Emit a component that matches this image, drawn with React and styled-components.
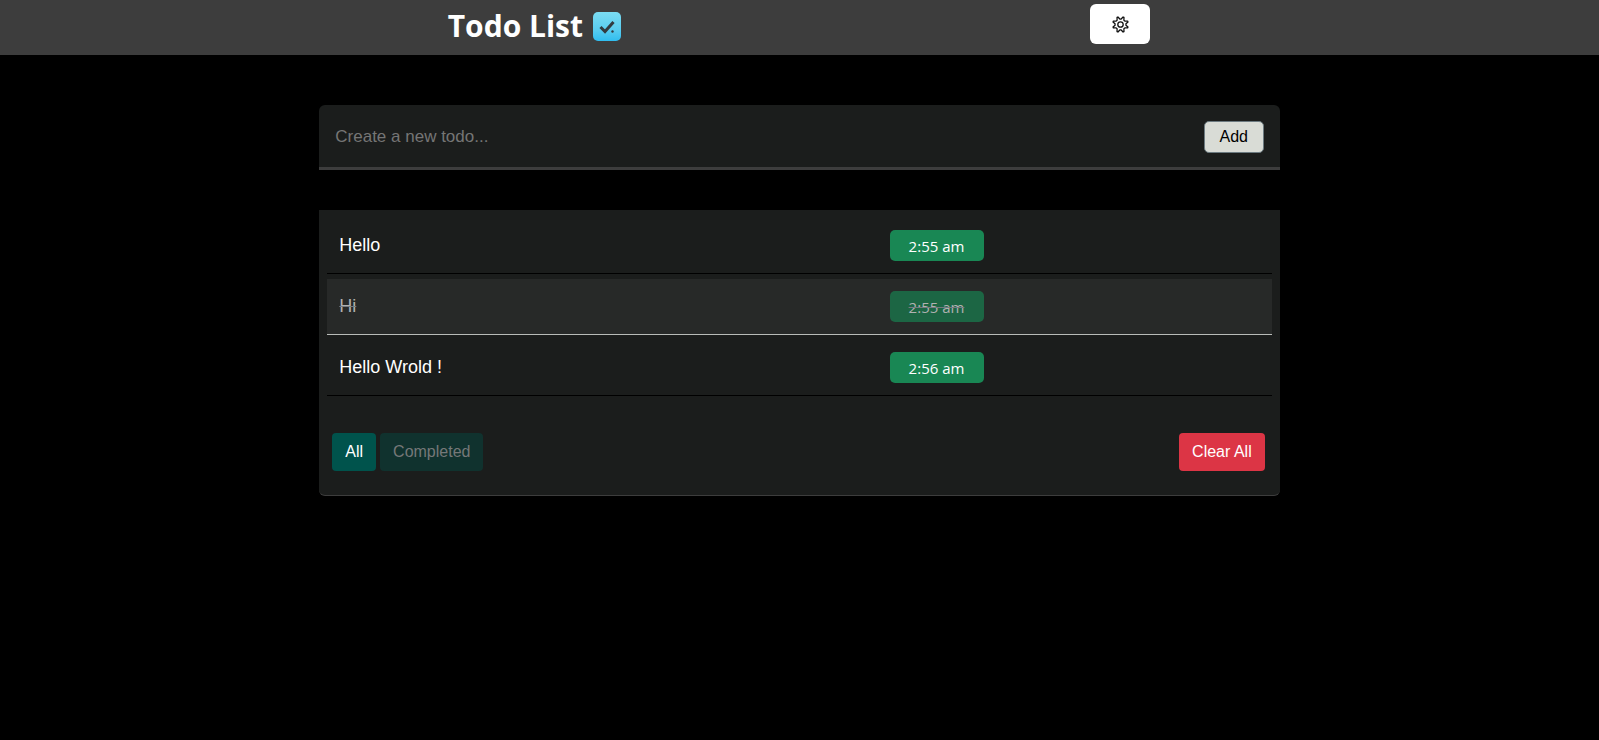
import React, { useState } from "react";
import styled, { createGlobalStyle } from "styled-components";

const GlobalStyle = createGlobalStyle`
  * { box-sizing: border-box; }
  body {
    margin: 0;
    background: #000;
    color: #fff;
    font-family: "Liberation Sans", Arial, sans-serif;
    font-size: 16px;
  }
`;

const Header = styled.header`
  display: flex;
  justify-content: space-between;
  align-items: flex-start;
  height: 55px;
  padding: 4px calc(28% + 1px) 0 28%;
  background: #3d3d3d;
`;

const Title = styled.h1`
  display: flex;
  align-items: center;
  gap: 10px;
  margin: 0;
  font: 700 30px/44px "Open Sans", "Noto Sans", sans-serif;
  white-space: nowrap;
`;

const Button = styled.button`
  border: 0;
  border-radius: 4px;
  padding: 0 13px;
  height: 38px;
  font: inherit;
  color: #fff;
  cursor: pointer;
`;

const SettingsButton = styled(Button)`
  display: grid;
  place-items: center;
  width: 60px;
  height: 40px;
  border-radius: 6px;
  background: #fff;
  color: #111;
`;

const Main = styled.main`
  display: flex;
  flex-direction: column;
  gap: 40px;
  width: calc(60% + 1px);
  margin: 50px auto 0;
`;

const TodoForm = styled.form`
  display: flex;
  align-items: center;
  height: 65px;
  padding: 2px 16px 0;
  background: #1b1d1c;
  border-bottom: 3px solid #3d3d3d;
  border-radius: 6px 6px 0 0;
`;

const TodoInput = styled.input`
  flex: 1;
  min-width: 0;
  padding: 0;
  border: 0;
  outline: 0;
  background: transparent;
  color: #fff;
  font: 17px/24px "Liberation Sans", Arial, sans-serif;
  &::placeholder { color: #757575; opacity: 1; }
`;

const AddButton = styled(Button)`
  width: 60px;
  height: 32px;
  border: 1px solid #6c7a80;
  border-radius: 5px;
  background: #d9dcd6;
  color: #000;
`;

const Panel = styled.section`
  padding: 8px 8px 24px;
  background: #1b1d1c;
  border-bottom: 1px solid #3d3d3d;
  border-radius: 0 0 6px 6px;
`;

const TodoItems = styled.ul`
  display: flex;
  flex-direction: column;
  gap: 5px;
  margin: 0;
  padding: 0;
  list-style: none;
`;

const TodoItem = styled.li`
  display: grid;
  grid-template-columns: 55fr 37fr;
  align-items: start;
  padding: 12px;
  border-bottom: 1px solid ${(p) => (p.$done ? "#b9bcb9" : "#000")};
  background: ${(p) => (p.$done ? "#272928" : "transparent")};
  color: ${(p) => (p.$done ? "#b0b1b1" : "#fff")};
  text-decoration: ${(p) => (p.$done ? "line-through #747a80" : "none")};
  font-size: 18px;
  line-height: 30px;
`;

const TimeBadge = styled.time`
  justify-self: start;
  width: 94px;
  height: 31px;
  border-radius: 5px;
  background: ${(p) => (p.$done ? "#1c6644" : "#198754")};
  text-align: center;
  font: 15px/32px "Open Sans", "Noto Sans", sans-serif;
`;

const Toolbar = styled.div`
  display: flex;
  justify-content: space-between;
  padding: 37px 7px 0 5px;
`;

const Filters = styled.div`
  display: flex;
  gap: 4px;
`;

const FilterButton = styled(Button)`
  background: ${(p) => (p.$active ? "#00534c" : "#10322e")};
  color: ${(p) => (p.$active ? "#fff" : "#757878")};
`;

const ClearButton = styled(Button)`
  background: #dc3545;
`;

const CheckMark = () => (
  <svg width="28" height="30" viewBox="0 0 28 30" aria-hidden="true">
    <defs>
      <linearGradient id="tile" x1="0" y1="0" x2="0" y2="1">
        <stop offset="0" stopColor="#7bdcf2" />
        <stop offset="0.6" stopColor="#5acdf0" />
        <stop offset="1" stopColor="#30bdf0" />
      </linearGradient>
    </defs>
    <rect y="1" width="28" height="29" rx="5" fill="url(#tile)" />
    <path d="M7.500 16l4.500 4.500L20.500 11" fill="none" stroke="#333b40" strokeWidth="3" />
    <circle cx="19.500" cy="20.500" r="1.200" fill="#333b40" />
  </svg>
);

const teeth = Array.from({ length: 16 }, (_, i) => {
  const [r, spread] = i % 2 ? [5.5, 0.12] : [7.9, 0.06];
  return [-spread, spread].map((d) => {
    const a = (i * Math.PI) / 8 + Math.PI / 8 + d;
    return `${(8 + r * Math.cos(a)).toFixed(2)},${(8 + r * Math.sin(a)).toFixed(2)}`;
  }).join(" ");
}).join(" ");

const Gear = () => (
  <svg width="17" height="17" viewBox="-0.5 -0.5 17 17" fill="none" stroke="currentColor" strokeWidth="1.300" strokeLinejoin="round" aria-hidden="true">
    <polygon points={teeth} />
    <circle cx="8" cy="8" r="2.700" />
  </svg>
);

const todos = [
  { text: "Hello", time: "2:55 am" },
  { text: "Hi", time: "2:55 am", done: true },
  { text: "Hello Wrold !", time: "2:56 am" },
];

export default function App() {
  const [draft, setDraft] = useState("");
  return (
    <>
      <GlobalStyle />
      <Header>
        <Title>Todo List <CheckMark /></Title>
        <SettingsButton type="button" aria-label="Settings"><Gear /></SettingsButton>
      </Header>
      <Main>
        <TodoForm onSubmit={(e) => e.preventDefault()}>
          <TodoInput
            aria-label="New todo"
            placeholder="Create a new todo..."
            value={draft}
            onChange={(e) => setDraft(e.target.value)}
          />
          <AddButton type="submit">Add</AddButton>
        </TodoForm>
        <Panel>
          <TodoItems>
            {todos.map((todo) => (
              <TodoItem key={todo.text} $done={todo.done}>
                <span>{todo.text}</span>
                <TimeBadge $done={todo.done}>{todo.time}</TimeBadge>
              </TodoItem>
            ))}
          </TodoItems>
          <Toolbar>
            <Filters>
              <FilterButton type="button" $active>All</FilterButton>
              <FilterButton type="button">Completed</FilterButton>
            </Filters>
            <ClearButton type="button">Clear All</ClearButton>
          </Toolbar>
        </Panel>
      </Main>
    </>
  );
}
